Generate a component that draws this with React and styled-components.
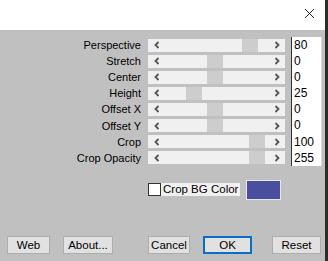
import styled, {createGlobalStyle} from "styled-components";

const GlobalStyle = createGlobalStyle`
  html, body {
    margin: 0;
    padding: 0;
    background: #2b2b2b;
  }
  body {
    font-family: "Liberation Sans", Arial, sans-serif;
    font-size: 11px;
    color: #000;
  }
`;

const sliders = [
    {label: 'Perspective', value: '80', pos: 77},
    {label: 'Stretch', value: '0', pos: 42},
    {label: 'Center', value: '0', pos: 42},
    {label: 'Height', value: '25', pos: 21},
    {label: 'Offset X', value: '0', pos: 42},
    {label: 'Offset Y', value: '0', pos: 42},
    {label: 'Crop', value: '100', pos: 84},
    {label: 'Crop Opacity', value: '255', pos: 84},
];

const Chevron = ({dir}) => (
    <svg width="6" height="8" viewBox="0 0 6 8">
        {dir === 'left'
            ? <path d="M4.5 1 L1.5 4 L4.5 7" fill="none" stroke="#555" strokeWidth="1.8"/>
            : <path d="M1.5 1 L4.5 4 L1.5 7" fill="none" stroke="#555" strokeWidth="1.8"/>}
    </svg>
);

const App = () => {
    return (
        <Window>
            <GlobalStyle/>
            <TitleBar>
                <CloseButton>
                    <svg width="11" height="11" viewBox="0 0 11 11">
                        <path d="M1 1 L10 10 M10 1 L1 10" stroke="#222" strokeWidth="1"/>
                    </svg>
                </CloseButton>
            </TitleBar>
            <Body>
                <SliderGrid>
                    {sliders.map(s => (
                        <Row key={s.label}>
                            <Label>{s.label}</Label>
                            <Track>
                                <ArrowBtn><Chevron dir="left"/></ArrowBtn>
                                <Rail>
                                    <Thumb $pos={s.pos}/>
                                </Rail>
                                <ArrowBtn><Chevron dir="right"/></ArrowBtn>
                            </Track>
                            <ValueBox>{s.value}</ValueBox>
                        </Row>
                    ))}
                </SliderGrid>
                <ColorRow>
                    <Check>
                        <CheckBox/>
                        <CheckLabel>Crop BG Color</CheckLabel>
                    </Check>
                    <Swatch/>
                </ColorRow>
                <ButtonBar>
                    <Button $left={7} $width={43}>Web</Button>
                    <Button $left={13} $width={50}>About...</Button>
                    <Button $left={35} $width={42}>Cancel</Button>
                    <Button $left={13} $width={49} $primary>OK</Button>
                    <Button $left={20} $width={49}>Reset</Button>
                </ButtonBar>
            </Body>
        </Window>
    );
}

export default App;


const Window = styled.div`
  width: 325px;
  height: 261px;
  display: flex;
  flex-direction: column;
  background: #c0c0c0;
`;

const TitleBar = styled.div`
  height: 30px;
  background: #fff;
  display: flex;
  justify-content: flex-end;
  align-items: flex-start;
`;

const CloseButton = styled.div`
  width: 11px;
  height: 11px;
  margin: 8px 10px 0 0;
  display: flex;
`;

const Body = styled.div`
  flex: 1;
  display: flex;
  flex-direction: column;
  padding-top: 7px;
`;

const SliderGrid = styled.div`
  display: flex;
  flex-direction: column;
`;

const Row = styled.div`
  display: grid;
  grid-template-columns: 141px 137px 30px;
  column-gap: 7px;
  height: 16.1px;
  align-items: center;
  & > :nth-child(3) {
    margin-left: -1px;
  }
`;

const Label = styled.div`
  text-align: right;
  line-height: 16px;
`;

const Track = styled.div`
  display: flex;
  height: 13px;
  background: #f0f0f0;
  align-items: center;
`;

const ArrowBtn = styled.div`
  width: 17px;
  height: 13px;
  display: flex;
  align-items: center;
  justify-content: center;
`;

const Rail = styled.div`
  flex: 1;
  height: 13px;
  display: flex;
`;

const Thumb = styled.div`
  width: 16px;
  height: 13px;
  background: #cdcdcd;
  margin-left: ${({$pos}) => $pos}px;
`;

const ValueBox = styled.div`
  align-self: stretch;
  background: #fff;
  border-left: 1px solid #333;
  border-right: 1px solid #d8d8d8;
  padding-left: 2px;
  line-height: 16px;
  font-size: 12px;
`;

const ColorRow = styled.div`
  display: flex;
  align-items: center;
  margin-top: 14px;
  padding-left: 148px;
`;

const Check = styled.div`
  display: flex;
  align-items: center;
  height: 13px;
`;

const CheckBox = styled.div`
  width: 11px;
  height: 11px;
  background: #fff;
  border: 1px solid #333;
`;

const CheckLabel = styled.div`
  width: 77px;
  height: 13px;
  line-height: 13px;
  background: #f0f0f0;
  padding-left: 2px;
  font-size: 11.5px;
`;

const Swatch = styled.div`
  width: 33px;
  height: 18px;
  margin-left: 6px;
  background: #4a4e9f;
  border: 1px solid #e8e8f0;
`;

const ButtonBar = styled.div`
  display: flex;
  margin-top: 36px;
`;

const Button = styled.div`
  box-sizing: border-box;
  width: ${({$width}) => $width}px;
  margin-left: ${({$left}) => $left}px;
  height: 18px;
  background: #e1e1e1;
  border: ${({$primary}) => $primary ? '2px solid #0a6ec8' : '1px solid #adadad'};
  display: flex;
  align-items: center;
  justify-content: center;
  font-size: 11.5px;
`;
